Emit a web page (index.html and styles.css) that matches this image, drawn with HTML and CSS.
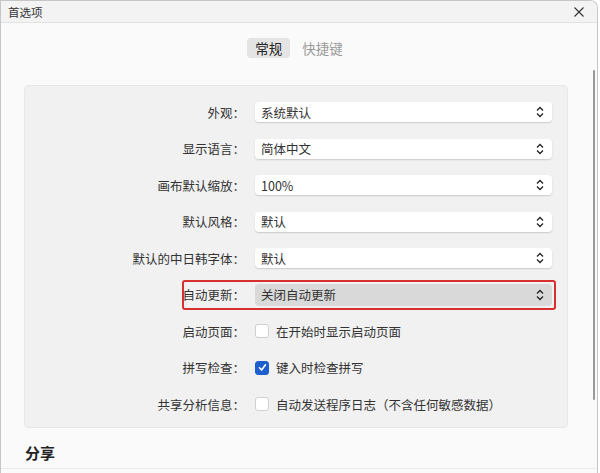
FILE: index.html
```html
<!DOCTYPE html>
<html lang="zh-CN">
<head>
<meta charset="utf-8">
<title>首选项</title>
<link rel="stylesheet" href="styles.css">
</head>
<body>
<div class="window">
  <div class="titlebar">
    <span class="title">首选项</span>
    <svg class="close" width="12" height="12" viewBox="0 0 12 12"><path d="M1.5 1.5 L10.5 10.5 M10.5 1.5 L1.5 10.5" stroke="#333" stroke-width="1.1" fill="none"/></svg>
  </div>
  <div class="content">
    <div class="tabs">
      <span class="tab active">常规</span>
      <span class="tab">快捷键</span>
    </div>
    <div class="panel">
      <div class="row"><span class="label">外观：</span><div class="select"><span>系统默认</span><svg class="arrows" width="8" height="12" viewBox="0 0 8 12"><path d="M1 4.5 L4 1.5 L7 4.5 M1 7.5 L4 10.5 L7 7.5" stroke="#222" stroke-width="1.3" fill="none"/></svg></div></div>
      <div class="row"><span class="label">显示语言：</span><div class="select"><span>简体中文</span><svg class="arrows" width="8" height="12" viewBox="0 0 8 12"><path d="M1 4.5 L4 1.5 L7 4.5 M1 7.5 L4 10.5 L7 7.5" stroke="#222" stroke-width="1.3" fill="none"/></svg></div></div>
      <div class="row"><span class="label">画布默认缩放：</span><div class="select"><span>100%</span><svg class="arrows" width="8" height="12" viewBox="0 0 8 12"><path d="M1 4.5 L4 1.5 L7 4.5 M1 7.5 L4 10.5 L7 7.5" stroke="#222" stroke-width="1.3" fill="none"/></svg></div></div>
      <div class="row"><span class="label">默认风格：</span><div class="select"><span>默认</span><svg class="arrows" width="8" height="12" viewBox="0 0 8 12"><path d="M1 4.5 L4 1.5 L7 4.5 M1 7.5 L4 10.5 L7 7.5" stroke="#222" stroke-width="1.3" fill="none"/></svg></div></div>
      <div class="row"><span class="label">默认的中日韩字体：</span><div class="select"><span>默认</span><svg class="arrows" width="8" height="12" viewBox="0 0 8 12"><path d="M1 4.5 L4 1.5 L7 4.5 M1 7.5 L4 10.5 L7 7.5" stroke="#222" stroke-width="1.3" fill="none"/></svg></div></div>
      <div class="row highlight"><span class="label">自动更新：</span><div class="select pressed"><span>关闭自动更新</span><svg class="arrows" width="8" height="12" viewBox="0 0 8 12"><path d="M1 4.5 L4 1.5 L7 4.5 M1 7.5 L4 10.5 L7 7.5" stroke="#222" stroke-width="1.3" fill="none"/></svg></div></div>
      <div class="row"><span class="label">启动页面：</span><label class="check"><span class="box"></span><span>在开始时显示启动页面</span></label></div>
      <div class="row"><span class="label">拼写检查：</span><label class="check"><span class="box checked"><svg width="9" height="9" viewBox="0 0 9 9"><path d="M1.5 4.8 L3.6 7 L7.5 1.8" stroke="#fff" stroke-width="1.6" fill="none" stroke-linecap="round" stroke-linejoin="round"/></svg></span><span>键入时检查拼写</span></label></div>
      <div class="row"><span class="label">共享分析信息：</span><label class="check"><span class="box"></span><span>自动发送程序日志（不含任何敏感数据）</span></label></div>
    </div>
    <h2 class="section">分享</h2>
  </div>
  <div class="scrollbar"></div>
</div>
</body>
</html>
```
FILE: styles.css
```css
html, body {
  margin: 0;
  padding: 0;
  background: #ffffff;
}
body {
  font-family: "Noto Sans", "Noto Sans CJK SC", sans-serif;
  color: #333;
  width: 600px;
  height: 473px;
  overflow: hidden;
}
.window {
  position: relative;
  width: 596px;
  height: 472px;
  border: 1px solid #c6c6c6;
  border-bottom: none;
  border-top-right-radius: 8px;
  background: #fafafa;
  overflow: hidden;
}
.titlebar {
  height: 21px;
  background: #f3f3f3;
  border-bottom: 1px solid #e2e2e2;
  display: flex;
  align-items: center;
  justify-content: space-between;
  padding: 0 12px 0 7px;
}
.title {
  font-family: "Noto Sans CJK SC", sans-serif;
  font-size: 11.5px;
  color: #333;
}
.close {
  display: block;
}
.content {
  padding: 15px 29px 0 23px;
  font-family: "Noto Sans CJK SC", sans-serif;
}
.tabs {
  display: flex;
  justify-content: center;
  gap: 10px;
}
.tab {
  font-size: 13.5px;
  height: 20px;
  line-height: 20px;
  padding: 0 8px;
  border-radius: 4px;
  color: #9a9a9a;
}
.tab.active {
  background: #e4e4e4;
  color: #222;
}
.tab:not(.active) {
  padding: 0 2px;
}
.panel {
  margin-top: 27px;
  background: #f1f1f1;
  border: 1px solid #e8e8e8;
  border-radius: 4px;
  padding: 8px 15px 4px 0;
  display: grid;
  grid-auto-rows: 36.5px;
}
.row {
  position: relative;
  display: grid;
  grid-template-columns: 220px 1fr;
  column-gap: 10px;
  align-items: center;
}
.label {
  text-align: right;
  font-size: 12.5px;
  color: #333;
  white-space: nowrap;
}
.select {
  height: 20px;
  background: #fff;
  border-radius: 4px;
  box-shadow: 0 1px 1.5px rgba(0, 0, 0, 0.16);
  display: flex;
  align-items: center;
  justify-content: space-between;
  padding: 0 8px 0 6px;
  font-size: 12.5px;
  color: #333;
}
.select.pressed {
  background: #d9d9d9;
  box-shadow: none;
  height: 22px;
}
.arrows {
  display: block;
}
.highlight::after {
  content: "";
  position: absolute;
  left: 157px;
  right: -4px;
  top: 3px;
  bottom: 3px;
  border: 2px solid #d8302e;
  border-radius: 3px;
  pointer-events: none;
}
.check {
  display: flex;
  align-items: center;
  gap: 7px;
  font-size: 12.5px;
  color: #333;
}
.box {
  width: 12px;
  height: 12px;
  border: 1px solid #cfcfcf;
  background: #fff;
  border-radius: 3px;
  display: flex;
  align-items: center;
  justify-content: center;
}
.box.checked {
  background: #1d5fcf;
  border-color: #1d5fcf;
}
.section {
  margin: 13px 0 0 1px;
  font-size: 15px;
  font-weight: bold;
  color: #222;
  height: 24px;
  line-height: 24px;
}
.scrollbar {
  position: absolute;
  right: 2px;
  top: 69px;
  width: 2px;
  height: 330px;
  background: #9a9a9a;
  border-radius: 1px;
}
.window::after {
  content: "";
  position: absolute;
  left: 0;
  right: 0;
  bottom: 4px;
  height: 1px;
  background: #ececec;
}
```
